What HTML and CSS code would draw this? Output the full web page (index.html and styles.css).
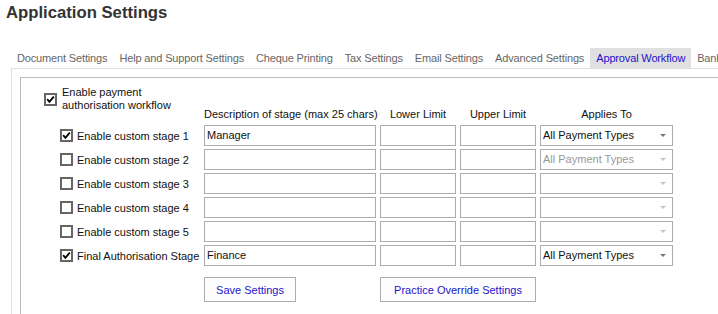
FILE: index.html
```html
<!DOCTYPE html>
<html lang="en">

<head>
    <meta charset="UTF-8">
    <meta name="viewport" content="width=device-width, initial-scale=1.0">
    <title>Application Settings</title>
    <link rel="stylesheet" href="styles.css">
</head>

<body>
    <h1 class="page-title">Application Settings</h1>

    <ul class="tabs">
        <li class="tab">Document Settings</li>
        <li class="tab">Help and Support Settings</li>
        <li class="tab">Cheque Printing</li>
        <li class="tab">Tax Settings</li>
        <li class="tab">Email Settings</li>
        <li class="tab">Advanced Settings</li>
        <li class="tab active">Approval Workflow</li>
        <li class="tab">Bank Feeds</li>
    </ul>

    <div class="panel">
        <div class="workflow">
            <div class="grid">
                <label class="master">
                    <span class="box"><svg viewBox="0 0 9 9"><polyline points="1.2,4.2 3.4,6.8 7.8,1.6" /></svg></span>
                    <span class="master-text">Enable payment<br>authorisation workflow</span>
                </label>
                <div class="head head-left">Description of stage (max 25 chars)</div>
                <div class="head">Lower Limit</div>
                <div class="head">Upper Limit</div>
                <div class="head">Applies To</div>

                <label class="stage">
                    <span class="box"><svg viewBox="0 0 9 9"><polyline points="1.2,4.2 3.4,6.8 7.8,1.6" /></svg></span>
                    Enable custom stage 1
                </label>
                <div class="field">Manager</div>
                <div class="field"></div>
                <div class="field"></div>
                <div class="select">All Payment Types<span class="arrow"></span></div>

                <label class="stage">
                    <span class="box"></span>
                    Enable custom stage 2
                </label>
                <div class="field"></div>
                <div class="field"></div>
                <div class="field"></div>
                <div class="select disabled">All Payment Types<span class="arrow"></span></div>

                <label class="stage">
                    <span class="box"></span>
                    Enable custom stage 3
                </label>
                <div class="field"></div>
                <div class="field"></div>
                <div class="field"></div>
                <div class="select disabled"><span class="arrow"></span></div>

                <label class="stage">
                    <span class="box"></span>
                    Enable custom stage 4
                </label>
                <div class="field"></div>
                <div class="field"></div>
                <div class="field"></div>
                <div class="select disabled"><span class="arrow"></span></div>

                <label class="stage">
                    <span class="box"></span>
                    Enable custom stage 5
                </label>
                <div class="field"></div>
                <div class="field"></div>
                <div class="field"></div>
                <div class="select disabled"><span class="arrow"></span></div>

                <label class="stage">
                    <span class="box"><svg viewBox="0 0 9 9"><polyline points="1.2,4.2 3.4,6.8 7.8,1.6" /></svg></span>
                    Final Authorisation Stage
                </label>
                <div class="field">Finance</div>
                <div class="field"></div>
                <div class="field"></div>
                <div class="select">All Payment Types<span class="arrow"></span></div>

                <button class="btn btn-save">Save Settings</button>
                <button class="btn btn-override">Practice Override Settings</button>
            </div>
        </div>
    </div>
</body>

</html>
```

FILE: styles.css
```css
body {
    margin: 0;
    font-family: "Liberation Sans", Arial, sans-serif;
    font-size: 11px;
    color: #111;
    background: #fff;
    overflow: hidden;
}

.page-title {
    margin: 0;
    padding: 3px 6px 0;
    font-size: 16.7px;
    line-height: 20px;
    font-weight: bold;
    color: #333;
}

/* tab strip */
.tabs {
    display: flex;
    margin: 25px 0 0 11px;
    padding: 0;
    list-style: none;
    white-space: nowrap;
    letter-spacing: -0.15px;
}

.tab {
    padding: 0 6px;
    line-height: 20px;
    color: #666;
}

.tab.active {
    background-color: #e0e0e0;
    color: #2414cc;
}

.panel {
    margin-left: 11px;
    padding: 8px 0 0 8px;
    border-top: 1px solid #dedede;
    border-left: 1px solid #dedede;
}

.workflow {
    min-height: 260px;
    padding: 8px 0 0 23px;
    border-top: 1px solid #bcbcbc;
    border-left: 1px solid #bcbcbc;
}

.grid {
    display: grid;
    grid-template-columns: 156px 172px 76px 76px 133px;
    grid-template-rows: 36px repeat(6, 21px) 33px;
    gap: 3px 4px;
}

/* checkboxes */
.box {
    flex: none;
    width: 9px;
    height: 9px;
    border: 2px solid #666;
    background: #fff;
}

.box svg {
    display: block;
    width: 9px;
    height: 9px;
    fill: none;
    stroke: #000;
    stroke-width: 1.8;
}

.master {
    display: flex;
    align-items: center;
    gap: 5px;
    align-self: start;
}

.master-text {
    line-height: 13px;
}

.stage {
    display: flex;
    align-items: center;
    gap: 4px;
    padding-left: 16px;
    white-space: nowrap;
}

.head {
    align-self: end;
    padding-bottom: 1px;
    line-height: 13px;
    text-align: center;
    white-space: nowrap;
}

.head-left {
    text-align: left;
}

/* inputs */
.field,
.select {
    position: relative;
    border: 1px solid #ababab;
    padding-left: 2px;
    line-height: 19px;
    background: #fff;
}

.select.disabled {
    color: #999;
}

.arrow {
    position: absolute;
    right: 6px;
    top: 8px;
    border-left: 3px solid transparent;
    border-right: 3px solid transparent;
    border-top: 3px solid #777;
}

.select.disabled .arrow {
    border-top-color: #c4c4c4;
}

/* buttons */
.btn {
    align-self: end;
    height: 25px;
    padding: 0;
    border: 1px solid #adadad;
    background: #fdfdfd;
    font-family: inherit;
    font-size: 11px;
    color: #2414cc;
}

.btn-save {
    grid-column: 2;
    width: 92px;
}

.btn-override {
    grid-column: 3 / span 2;
}
```
